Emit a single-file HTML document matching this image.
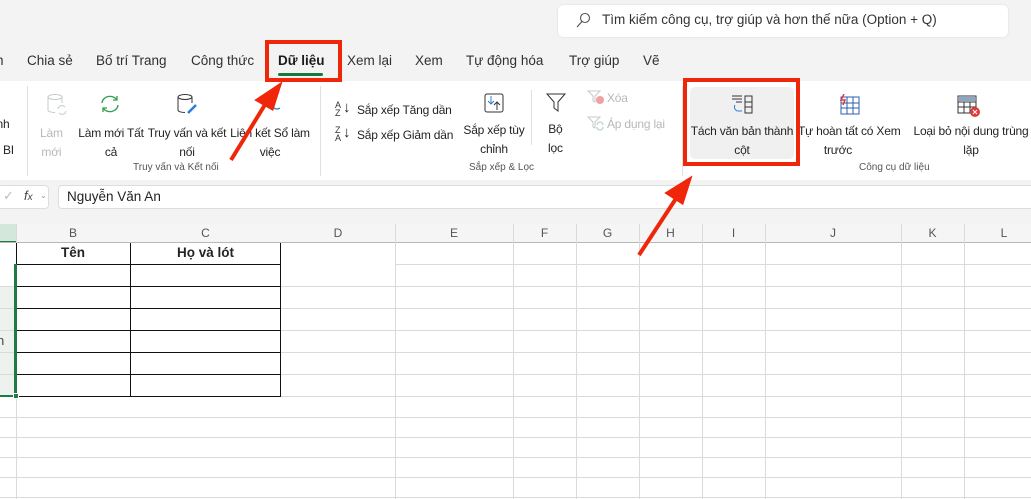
<!DOCTYPE html>
<html><head><meta charset="utf-8"><style>
*{margin:0;padding:0;box-sizing:border-box}
body{width:1031px;height:499px;overflow:hidden;background:#f3f3f3;font-family:"Liberation Sans","DejaVu Sans",sans-serif;color:#242424;position:relative}
.a{position:absolute;white-space:nowrap}
.t{font-size:13.5px;color:#303030}
.s{font-size:12px;letter-spacing:-0.2px;color:#242424;text-align:center;line-height:19px}
.g{font-size:10px;color:#555}
.dis{color:#b8b8b8}
.hl{position:absolute;height:1px;background:#dadada}
.vl{position:absolute;width:1px;background:#dadada}
.ch{position:absolute;top:226px;font-size:12px;color:#555;text-align:center}
</style></head><body>
<div class="a" style="left:558px;top:5px;width:450px;height:32px;background:#fff;border-radius:5px;box-shadow:0 0 2px rgba(0,0,0,.12)"></div>
<svg class="a" style="left:575px;top:12px" width="16" height="16"><circle cx="10" cy="6" r="4.5" fill="none" stroke="#555" stroke-width="1.1"/><line x1="7" y1="9.5" x2="2" y2="15" stroke="#555" stroke-width="1.2"/></svg>
<div class="a" style="left:602px;top:12px;font-size:13.5px;color:#333">Tìm kiếm công cụ, trợ giúp và hơn thế nữa (Option + Q)</div>
<div class="a t" style="left:-4px;top:53px">n</div>
<div class="a t" style="left:27px;top:53px">Chia sẻ</div>
<div class="a t" style="left:96px;top:53px">Bố trí Trang</div>
<div class="a t" style="left:191px;top:53px">Công thức</div>
<div class="a t" style="left:278px;top:53px;font-weight:bold;color:#1a1a1a">Dữ liệu</div>
<div class="a" style="left:278px;top:73px;width:45px;height:3px;background:#137a3c;border-radius:2px"></div>
<div class="a t" style="left:347px;top:53px">Xem lại</div>
<div class="a t" style="left:415px;top:53px">Xem</div>
<div class="a t" style="left:466px;top:53px">Tự động hóa</div>
<div class="a t" style="left:569px;top:53px">Trợ giúp</div>
<div class="a t" style="left:643px;top:53px">Vẽ</div>
<div class="a" style="left:0;top:81px;width:1031px;height:99px;background:#fff"></div>
<div class="vl" style="left:27px;top:86px;height:90px;background:#e0e0e0"></div>
<div class="vl" style="left:320px;top:86px;height:90px;background:#e0e0e0"></div>
<div class="vl" style="left:682px;top:86px;height:90px;background:#e0e0e0"></div>
<div class="vl" style="left:531px;top:90px;height:55px;background:#e0e0e0"></div>
<div class="a s" style="left:-10px;top:115px;text-align:left">anh</div>
<div class="a s" style="left:3px;top:141px">BI</div>
<svg class="a" style="left:46px;top:93px" width="22" height="24"><ellipse cx="9" cy="4" rx="7" ry="2.5" fill="none" stroke="#c8c8c8"/><path d="M2 4v13c0 1.5 3 2.5 7 2.5M16 4v6" fill="none" stroke="#c8c8c8"/><path d="M12 16a4 4 0 0 1 7-2M20 18a4 4 0 0 1-7 2" fill="none" stroke="#b8d8c0"/></svg>
<div class="a s dis" style="left:40px;top:124px">Làm<br>mới</div>
<svg class="a" style="left:99px;top:94px" width="22" height="20"><path d="M3 9a8 7 0 0 1 15-3M19 11a8 7 0 0 1-15 3" fill="none" stroke="#2e9e4f" stroke-width="1.3"/><path d="M18 2v4h-4M4 18v-4h4" fill="none" stroke="#2e9e4f" stroke-width="1.3"/></svg>
<div class="a s" style="left:78px;top:124px;width:66px">Làm mới Tất<br>cả</div>
<svg class="a" style="left:176px;top:93px" width="22" height="24"><ellipse cx="9" cy="4" rx="7" ry="2.5" fill="none" stroke="#333"/><path d="M2 4v13c0 1.5 3 2.5 7 2.5M16 4v6" fill="none" stroke="#333"/><path d="M12 20l8-8" stroke="#2b7cd3" stroke-width="2.5"/></svg>
<div class="a s" style="left:147px;top:124px;width:80px">Truy vấn và kết<br>nối</div>
<svg class="a" style="left:264px;top:96px" width="20" height="18"><path d="M4 12a4 3 0 0 1 6 0M10 12a4 3 0 0 0 6 0" fill="none" stroke="#2b7cd3" stroke-width="1.3"/></svg>
<div class="a s" style="left:230px;top:124px;width:80px">Liên kết Sổ làm<br>việc</div>
<div class="a g" style="left:133px;top:162px">Truy vấn và Kết nối</div>
<div class="a" style="left:335px;top:101px;font-size:9px;line-height:8px;color:#333">A<br>Z</div><div class="a" style="left:343px;top:99px;font-size:15px">↓</div>
<div class="a s" style="left:357px;top:101px">Sắp xếp Tăng dần</div>
<div class="a" style="left:335px;top:126px;font-size:9px;line-height:8px;color:#333">Z<br>A</div><div class="a" style="left:343px;top:124px;font-size:15px">↓</div>
<div class="a s" style="left:357px;top:126px">Sắp xếp Giảm dần</div>
<svg class="a" style="left:484px;top:93px" width="20" height="20"><rect x="1" y="1" width="18" height="18" rx="2" fill="none" stroke="#333"/><path d="M7 3v8M4 8l3 3 3-3" fill="none" stroke="#2b7cd3"/><path d="M13 17v-8M10 12l3-3 3 3" fill="none" stroke="#333"/></svg>
<div class="a s" style="left:462px;top:121px;width:64px">Sắp xếp tùy<br>chỉnh</div>
<div class="a g" style="left:469px;top:162px">Sắp xếp &amp; Lọc</div>
<svg class="a" style="left:546px;top:92px" width="20" height="20"><path d="M1 2h18l-7 8v9l-4-3v-6z" fill="none" stroke="#333"/></svg>
<div class="a s" style="left:548px;top:120px">Bộ<br>lọc</div>
<svg class="a" style="left:587px;top:89px" width="18" height="16"><path d="M1 2h12l-5 5v6l-2-1v-5z" fill="none" stroke="#c8c8c8"/><circle cx="13" cy="11" r="4" fill="#f0a0a0"/></svg><div class="a s dis" style="left:607px;top:89px">Xóa</div>
<svg class="a" style="left:587px;top:115px" width="18" height="16"><path d="M1 2h12l-5 5v6l-2-1v-5z" fill="none" stroke="#c8c8c8"/><path d="M10 10a3 3 0 0 1 6 0M16 12a3 3 0 0 1-6 0" fill="none" stroke="#a8d0b0"/></svg><div class="a s dis" style="left:607px;top:115px">Áp dụng lại</div>
<div class="a" style="left:690px;top:87px;width:104px;height:72px;background:#f0f0f0;border-radius:5px"></div>
<svg class="a" style="left:731px;top:94px" width="24" height="22"><path d="M1 2h10M1 5h10M5 8h6" stroke="#333"/><path d="M4 11a4 4 0 0 0 4 6h3" fill="none" stroke="#2b7cd3"/><rect x="14" y="2" width="7" height="17" fill="none" stroke="#333"/><path d="M14 8h7M14 13h7" stroke="#333"/></svg>
<div class="a s" style="left:690px;top:122px;width:104px">Tách văn bản thành<br>cột</div>
<svg class="a" style="left:839px;top:94px" width="22" height="22"><rect x="2" y="3" width="18" height="17" fill="none" stroke="#2b5fae"/><path d="M2 9h18M2 14h18M8 3v17M14 3v17" stroke="#2b5fae"/><path d="M5 0l-3 6h4l-2 5" fill="none" stroke="#e03b3b" stroke-width="1.5"/></svg>
<div class="a s" style="left:798px;top:122px;width:80px">Tự hoàn tất có Xem<br>trước</div>
<svg class="a" style="left:957px;top:94px" width="24" height="24"><rect x="1" y="2" width="18" height="17" fill="none" stroke="#333"/><rect x="2" y="3" width="16" height="4" fill="#8aa6c8"/><path d="M1 8h18M1 13h18M7 8v11M13 8v11" stroke="#333"/><circle cx="18" cy="18" r="5" fill="#e03b3b"/><path d="M16 16l4 4M20 16l-4 4" stroke="#fff"/></svg>
<div class="a s" style="left:906px;top:122px;width:130px">Loại bỏ nội dung trùng<br>lặp</div>
<div class="a g" style="left:859px;top:162px">Công cụ dữ liệu</div>
<div class="a" style="left:-10px;top:185px;width:59px;height:24px;background:#fff;border:1px solid #ddd;border-radius:4px"></div>
<div class="a" style="left:3px;top:188px;font-size:13px;color:#bbb">✓</div>
<div class="a" style="left:24px;top:188px;font-size:13px;font-style:italic;color:#444">f<span style="font-size:10px">x</span></div>
<div class="a" style="left:40px;top:191px;font-size:8px;color:#999">⌄</div>
<div class="a" style="left:58px;top:185px;width:990px;height:24px;background:#fff;border:1px solid #ddd;border-radius:4px"></div>
<div class="a" style="left:67px;top:189px;font-size:13.5px;color:#222">Nguyễn Văn An</div>
<div class="a" style="left:0;top:224px;width:1031px;height:275px;background:#fff"></div>
<div class="a" style="left:0;top:224px;width:1031px;height:18px;background:#f5f5f5"></div>
<div class="a" style="left:0;top:224px;width:16px;height:18px;background:#d3e8da"></div>
<div class="a" style="left:0;top:241px;width:16px;height:2px;background:#1e7b45"></div>
<div class="hl" style="left:0;top:242px;width:1031px;background:#b8b8b8"></div>
<div class="a" style="left:0;top:286px;width:15px;height:110px;background:#eef2ee"></div>
<div id="g"></div>
<div class="ch" style="left:16px;width:114px">B</div>
<div class="ch" style="left:130px;width:151px">C</div>
<div class="ch" style="left:281px;width:114px">D</div>
<div class="ch" style="left:395px;width:118px">E</div>
<div class="ch" style="left:513px;width:63px">F</div>
<div class="ch" style="left:576px;width:63px">G</div>
<div class="ch" style="left:639px;width:63px">H</div>
<div class="ch" style="left:702px;width:63px">I</div>
<div class="ch" style="left:765px;width:136px">J</div>
<div class="ch" style="left:901px;width:63px">K</div>
<div class="ch" style="left:964px;width:80px">L</div>
<div class="a" style="left:16px;top:243px;width:265px;height:154px;border:1px solid #111;border-top:none"></div>
<div class="a" style="left:16px;width:114px;text-align:center;font-size:13.5px;font-weight:bold;top:245px">Tên</div>
<div class="a" style="left:130px;width:151px;text-align:center;font-size:13.5px;font-weight:bold;top:245px">Họ và lót</div>
<div class="a" style="left:-3px;top:333px;font-size:13px;color:#444">n</div>
<div class="a" style="left:14px;top:264px;width:3px;height:133px;background:#1e7b45"></div>
<div class="a" style="left:0;top:395px;width:16px;height:2px;background:#1e7b45"></div>
<div class="a" style="left:13px;top:393px;width:6px;height:6px;background:#1e7b45;border:1px solid #fff"></div>
<script>
var g=document.getElementById('g'),h='';
[16,395,513,576,639,702,765,901,964].forEach(function(x){h+='<div class="vl" style="left:'+x+'px;top:224px;height:275px"></div>'});
[264,286,308,330,352,374,396,417,437,457,477,497].forEach(function(y){h+='<div class="hl" style="left:'+(y==264?395:0)+'px;top:'+y+'px;width:1031px"></div>'});
[264,286,308,330,352,374].forEach(function(y){h+='<div class="a" style="left:16px;top:'+y+'px;width:265px;height:1px;background:#111"></div>'});
h+='<div class="a" style="left:130px;top:243px;width:1px;height:154px;background:#111"></div>';
g.innerHTML=h;
</script>
<div class="a" style="left:265px;top:40px;width:77px;height:42px;border:4px solid #f0260a"></div>
<div class="a" style="left:683px;top:78px;width:117px;height:88px;border:4px solid #f0260a"></div>
<svg class="a" style="left:0;top:0" width="1031" height="499"><g stroke="#f0260a" stroke-width="4" fill="#f0260a"><line x1="231" y1="160" x2="266" y2="103"/><polygon points="279,86 258,100 272,108" /><line x1="639" y1="255" x2="677" y2="197"/><polygon points="689,180 668,193 682,202"/></g></svg>
</body></html>
